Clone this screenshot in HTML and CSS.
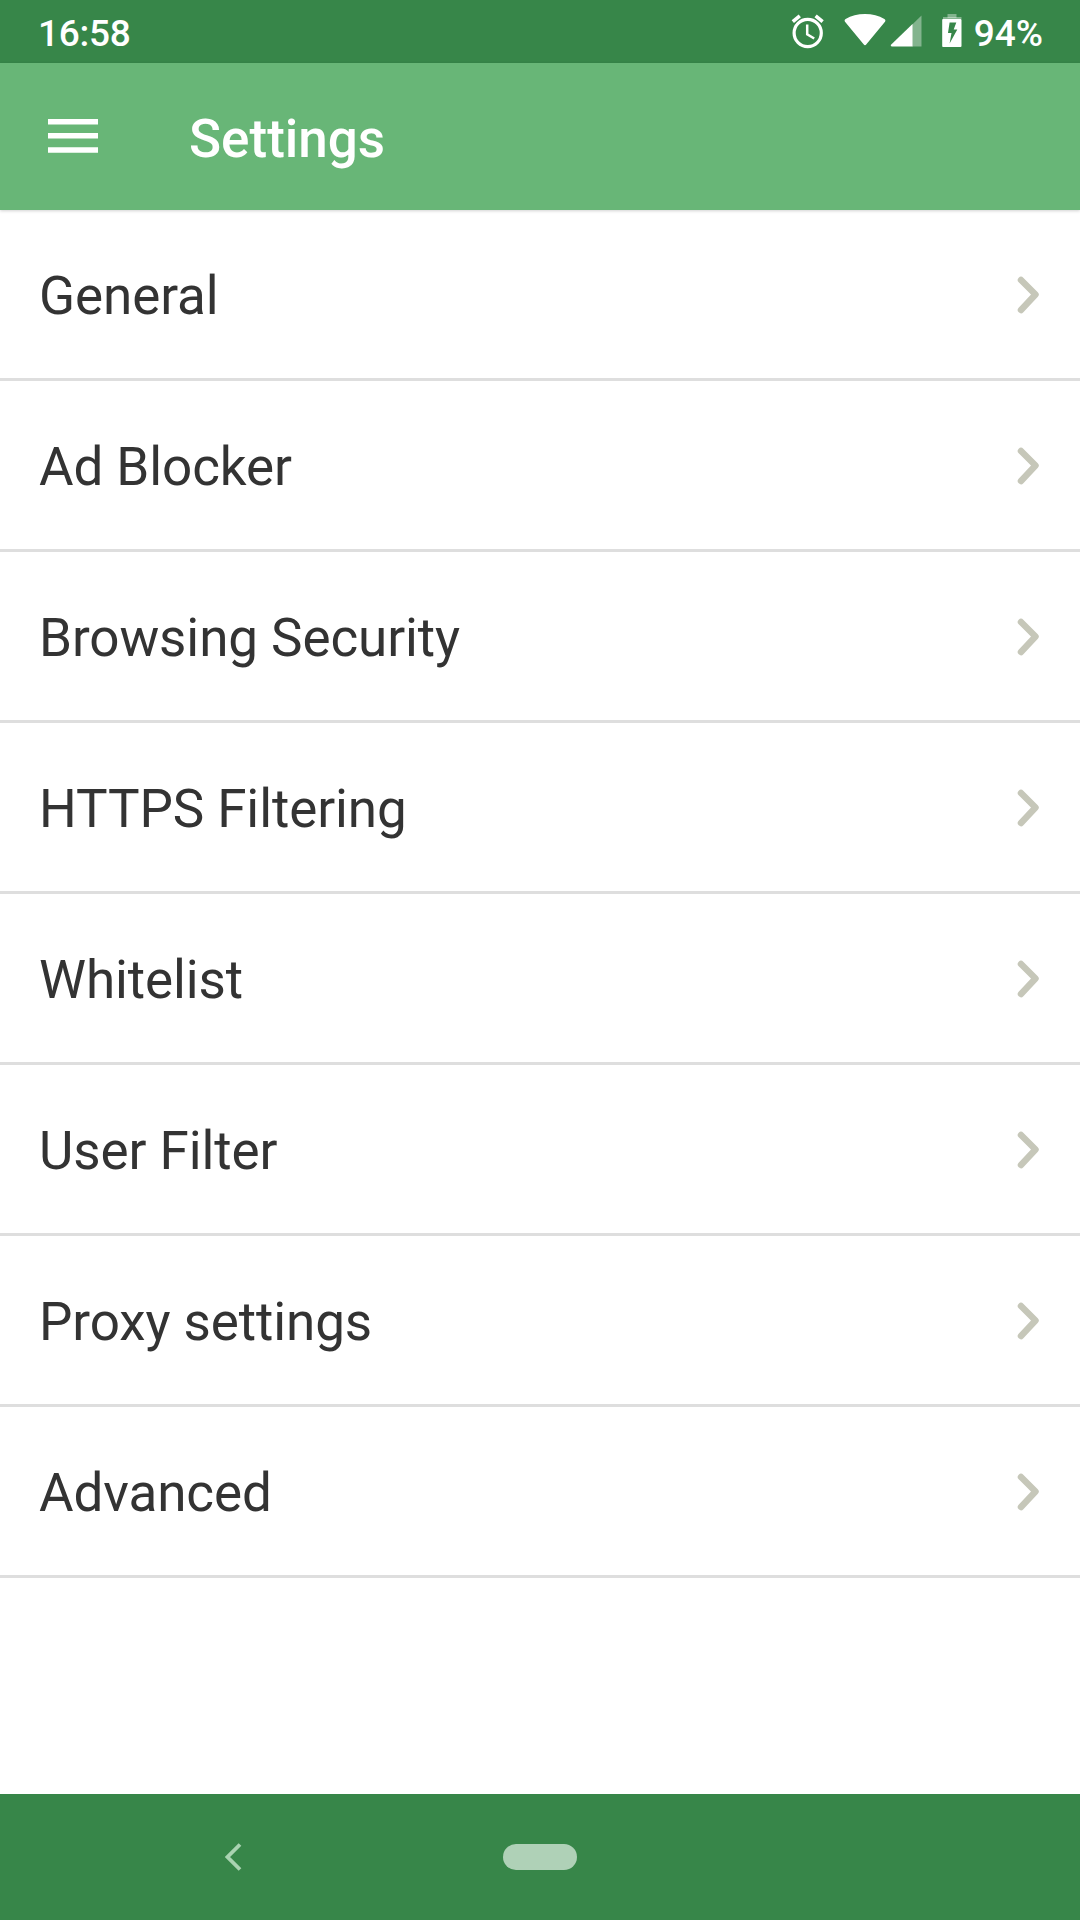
FILE: index.html
```html
<!DOCTYPE html>
<html lang="en">
<head>
<meta charset="utf-8">
<title>Settings</title>
<link rel="stylesheet" href="styles.css">
</head>
<body>
<div class="screen">
  <div class="status-bar">
    <span class="clock">16:58</span>
    <div class="status-icons">
      <svg class="alarm" width="34" height="36" viewBox="0 0 34 36" fill="none" stroke="#fff">
        <circle cx="16.7" cy="20" r="13.6" stroke-width="3.2"/>
        <path d="M16.2 11.5v9.7l7 4.3" stroke-width="2.5"/>
        <path d="M1.8 8.6l7-5.8M31.600 8.600l-7-5.800" stroke-width="3.600"/>
      </svg>
      <svg class="wifi" width="42" height="34" viewBox="0 0 42 34" fill="#fff">
        <path d="M1.200 9Q-.2 7.300 1.600 6.100Q10 1 21 1T40.400 6.100Q42.200 7.300 40.800 9L22.400 31.300Q21 33 19.600 31.300Z"/>
      </svg>
      <svg class="signal" width="33" height="32" viewBox="0 0 33 32" fill="#fff">
        <path d="M31.500.5V31.500H22V9.700Z" opacity=".38"/>
        <path d="M22.500 9V31.500H2Q0 31.300 1 29.800Z"/>
      </svg>
      <svg class="battery" width="20" height="35" viewBox="0 0 20 35" fill="#fff">
        <path d="M5.500 1h9v4h-9z" opacity=".38"/>
        <path d="M1 4h18.500v2H1z" opacity=".38"/>
        <path fill-rule="evenodd" d="M1 6H18.500Q19.500 6 19.500 7V33Q19.500 34 18.500 34H1Q.2 34 .2 33V7Q.2 6 1 6ZM7.600 9.500L6 20H9.500L7.600 30.500L15.300 16.500H11.700L14.300 9.500Z"/>
      </svg>
      <span class="level">94%</span>
    </div>
  </div>
  <header class="app-bar">
    <svg class="menu" width="50" height="36" viewBox="0 0 50 36" fill="#fff">
      <path d="M0 1h50v5.400H0zM0 15.100h50v5.400H0zM0 29.200h50v5.600H0z"/>
    </svg>
    <h1 class="title">Settings</h1>
  </header>
  <ul class="list">
    <li class="row"><span class="label">General</span><svg class="chevron" viewBox="0 0 24 40"><path d="M4 5L18.500 19.500L4 35"/></svg></li>
    <li class="row"><span class="label">Ad Blocker</span><svg class="chevron" viewBox="0 0 24 40"><path d="M4 5L18.500 19.500L4 35"/></svg></li>
    <li class="row"><span class="label">Browsing Security</span><svg class="chevron" viewBox="0 0 24 40"><path d="M4 5L18.500 19.500L4 35"/></svg></li>
    <li class="row"><span class="label">HTTPS Filtering</span><svg class="chevron" viewBox="0 0 24 40"><path d="M4 5L18.500 19.500L4 35"/></svg></li>
    <li class="row"><span class="label">Whitelist</span><svg class="chevron" viewBox="0 0 24 40"><path d="M4 5L18.500 19.500L4 35"/></svg></li>
    <li class="row"><span class="label">User Filter</span><svg class="chevron" viewBox="0 0 24 40"><path d="M4 5L18.500 19.500L4 35"/></svg></li>
    <li class="row"><span class="label">Proxy settings</span><svg class="chevron" viewBox="0 0 24 40"><path d="M4 5L18.500 19.500L4 35"/></svg></li>
    <li class="row"><span class="label">Advanced</span><svg class="chevron" viewBox="0 0 24 40"><path d="M4 5L18.500 19.500L4 35"/></svg></li>
  </ul>
  <nav class="nav-bar">
    <svg class="back" width="17" height="28" viewBox="0 0 17 28"><path d="M15 1.500L2.500 14L15 26.500"/></svg>
    <span class="home"></span>
    <span></span>
  </nav>
</div>
</body>
</html>
```
FILE: styles.css
```css
* {
  box-sizing: border-box;
}

body {
  margin: 0;
  font-family: Roboto, sans-serif;
  color: #333;
  background: #fff;
}

svg {
  display: block;
  flex: none;
}

.screen {
  display: flex;
  flex-direction: column;
  width: 1080px;
  height: 1920px;
  overflow: hidden;
}

.status-bar {
  display: flex;
  justify-content: space-between;
  flex: none;
  height: 63px;
  padding: 0 37px 0 38px;
  background: #378649;
  color: #fff;
  font-size: 37px;
  font-weight: 500;
  line-height: 42px;
}

.clock,
.level {
  padding-top: 13px;
}

.clock {
  letter-spacing: -0.3px;
}

.status-icons {
  display: flex;
}

.alarm {
  margin: 13px 19px 0 0;
}

.wifi {
  margin: 13px 4px 0 0;
}

.signal {
  margin: 15px 19px 0 0;
}

.battery {
  margin: 13px 12px 0 0;
}

.app-bar {
  position: relative;
  display: flex;
  align-items: center;
  flex: none;
  height: 147px;
  padding-left: 48px;
  background: #68b677;
  box-shadow: 0 1px 3px rgba(0, 0, 0, 0.18);
  color: #fff;
}

.menu {
  margin-bottom: 2px;
}

.title {
  margin: 4px 0 0 91px;
  font-size: 53px;
  font-weight: 500;
  line-height: 64px;
}

.list {
  flex: 1;
  margin: 0;
  padding: 0;
  list-style: none;
}

.row {
  display: flex;
  align-items: center;
  justify-content: space-between;
  height: 171px;
  padding: 0 39px 0 39px;
  border-bottom: 3px solid #dedede;
}

.label {
  padding-top: 3px;
  font-size: 53px;
  letter-spacing: -0.1px;
  line-height: 64px;
}

.chevron {
  width: 24px;
  height: 40px;
  margin-top: 2px;
  fill: none;
  stroke: #c6c7b9;
  stroke-width: 6.5;
  stroke-linecap: round;
  stroke-linejoin: round;
}

.nav-bar {
  display: grid;
  grid-template-columns: 1fr 74px 1fr;
  flex: none;
  height: 126px;
  padding-top: 50px;
  background: #378649;
}

.back {
  margin: -1px 0 0 225px;
  fill: none;
  stroke: #a9d3b1;
  stroke-width: 3.8;
}

.home {
  height: 26px;
  border-radius: 13px;
  background: #afd1b7;
}
```
